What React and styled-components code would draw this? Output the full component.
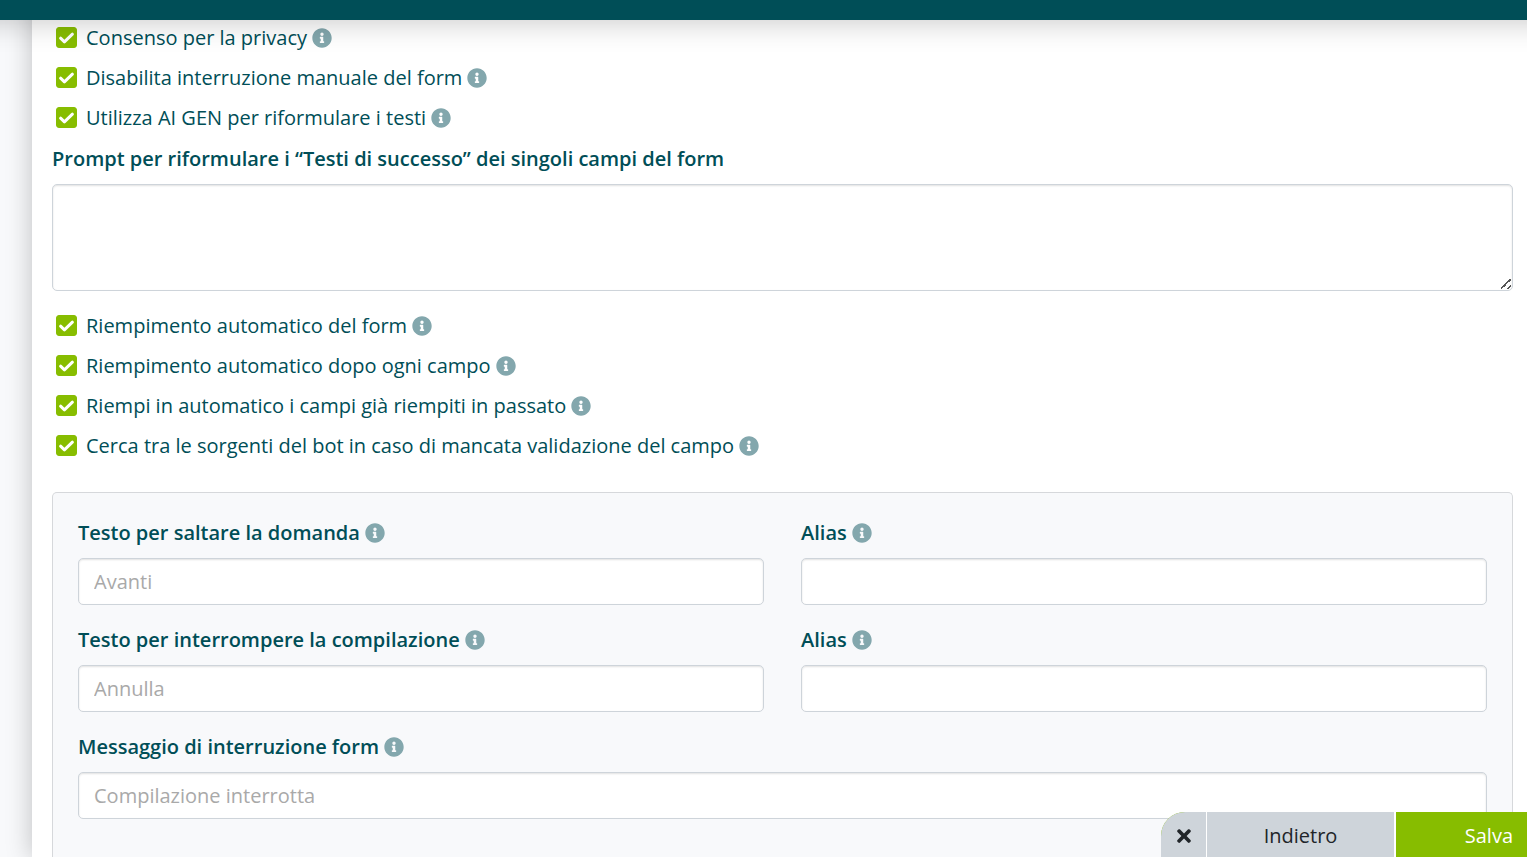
import React, { useState } from "react";
import styled, { createGlobalStyle } from "styled-components";
import { FaInfoCircle, FaTimes } from "react-icons/fa";

const GlobalStyle = createGlobalStyle`
  *, *::before, *::after { box-sizing: border-box; }
  body {
    margin: 0;
    background: #f8f9fb;
    color: #004e57;
    font: 400 20px/30px "Open Sans", sans-serif;
  }
  input, textarea, button { font: inherit; color: inherit; margin: 0; }
`;

const TopBar = styled.header`
  position: fixed;
  inset: 0 0 auto;
  z-index: 2;
  height: 20px;
  background: #004e57;
  box-shadow: 0 -40px 28px 42px rgba(0, 0, 0, 0.22);
`;

const Content = styled.main`
  display: flex;
  flex-direction: column;
  min-height: 100vh;
  margin-left: 32px;
  padding: 18px 14px 0 20px;
  background: #fff;
  box-shadow: 0 0 24px 1px rgba(0, 0, 0, 0.22);
`;

const OptionRow = styled.div`
  display: flex;
  align-items: center;
  height: 40px;
  padding-left: 4px;
`;

const OptionLabel = styled.label`
  display: flex;
  align-items: center;
  gap: 9px;
`;

const Box = styled.span`
  position: relative;
  display: flex;
  width: 21px;
  height: 21px;
  margin-bottom: 2px;

  svg {
    position: absolute;
    inset: 0;
    width: 100%;
    height: 100%;
    color: #fff;
    pointer-events: none;
  }
`;

const Checkbox = styled.input`
  appearance: none;
  width: 100%;
  height: 100%;
  border: 1px solid #87bd00;
  border-radius: 3px;
  background: #fff;

  &:checked { background: #87bd00; }
`;

const InfoIcon = styled(FaInfoCircle)`
  flex: none;
  width: 20px;
  height: 20px;
  margin: 0 0 1px 5px;
  color: #83a7ad;
`;

const FieldHead = styled.div`
  display: flex;
  align-items: center;
  margin-bottom: 10px;
  font-weight: 600;
`;

const PromptField = styled.div`
  padding: 6px 0 15px;
`;

const fieldLook = `
  display: block;
  width: 100%;
  padding: 8px 15px;
  border: 1px solid #ced4da;
  border-radius: 5px;
  background: #fff;
  box-shadow: inset 0 1px 2px rgba(0, 0, 0, 0.12);
  outline: none;
`;

const TextArea = styled.textarea`
  ${fieldLook}
  height: 107px;
  resize: vertical;

  &::-webkit-resizer {
    background: linear-gradient(
        135deg,
        transparent 44%,
        #555 44% 55%,
        transparent 55% 76%,
        #555 76% 87%,
        transparent 87%
      )
      4px 4px / 10px 10px no-repeat;
  }
`;

const TextInput = styled.input`
  ${fieldLook}
  height: 47px;

  &::placeholder { color: #a9a9a9; opacity: 1; }
`;

const Panel = styled.section`
  flex: 1;
  margin-top: 26px;
  padding: 25px 25px 36px;
  border: 1px solid #d6d8db;
  border-bottom: 0;
  border-radius: 5px 5px 0 0;
  background: #f8f9fb;
`;

const FieldGrid = styled.div`
  display: grid;
  grid-template-columns: 1fr 1fr;
  gap: 20px 37px;
`;

const FieldCell = styled.div`
  grid-column: ${(p) => (p.$wide ? "1 / -1" : "auto")};
`;

const ActionBar = styled.nav`
  position: fixed;
  right: 0;
  bottom: 0;
  z-index: 3;
  display: flex;
  height: 45px;
  border-top-left-radius: 24px;
  background: #87bd00;
`;

const ActionButton = styled.button`
  display: flex;
  align-items: center;
  justify-content: center;
  padding: 2px 0 0;
  border: 0;
  background: #ced4da;
  color: #212529;
`;

const CloseButton = styled(ActionButton)`
  width: 46px;
  border-right: 1px solid #fff;
  border-top-left-radius: 24px;
`;

const BackButton = styled(ActionButton)`
  width: 189px;
  border-right: 2px solid #fff;
`;

const SaveButton = styled(ActionButton)`
  justify-content: flex-end;
  width: 131px;
  padding-right: 14px;
  background: #87bd00;
  color: #fff;
`;

function Tick() {
  return (
    <svg viewBox="0 0 21 21" fill="none" aria-hidden="true">
      <path
        d="M4.6 11.2 8.4 14.8 16.4 7.2"
        stroke="currentColor"
        strokeWidth="3"
        strokeLinecap="round"
        strokeLinejoin="round"
      />
    </svg>
  );
}

function Option({ id, children }) {
  const [checked, setChecked] = useState(true);
  return (
    <OptionRow>
      <OptionLabel htmlFor={id}>
        <Box>
          <Checkbox id={id} type="checkbox" checked={checked} onChange={(e) => setChecked(e.target.checked)} />
          {checked && <Tick />}
        </Box>
        {children}
      </OptionLabel>
      <InfoIcon aria-hidden="true" />
    </OptionRow>
  );
}

function Field({ id, label, placeholder, wide }) {
  return (
    <FieldCell $wide={wide}>
      <FieldHead>
        <label htmlFor={id}>{label}</label>
        <InfoIcon aria-hidden="true" />
      </FieldHead>
      <TextInput id={id} type="text" placeholder={placeholder} />
    </FieldCell>
  );
}

export default function App() {
  return (
    <>
      <GlobalStyle />
      <TopBar />
      <Content>
        <Option id="privacy">Consenso per la privacy</Option>
        <Option id="no-stop">Disabilita interruzione manuale del form</Option>
        <Option id="ai-gen">Utilizza AI GEN per riformulare i testi</Option>
        <PromptField>
          <FieldHead>
            <label htmlFor="prompt">Prompt per riformulare i “Testi di successo” dei singoli campi del form</label>
          </FieldHead>
          <TextArea id="prompt" />
        </PromptField>
        <Option id="autofill">Riempimento automatico del form</Option>
        <Option id="autofill-each">Riempimento automatico dopo ogni campo</Option>
        <Option id="autofill-past">Riempi in automatico i campi già riempiti in passato</Option>
        <Option id="sources">Cerca tra le sorgenti del bot in caso di mancata validazione del campo</Option>
        <Panel>
          <FieldGrid>
            <Field id="skip" label="Testo per saltare la domanda" placeholder="Avanti" />
            <Field id="skip-alias" label="Alias" />
            <Field id="stop" label="Testo per interrompere la compilazione" placeholder="Annulla" />
            <Field id="stop-alias" label="Alias" />
            <Field id="stop-message" label="Messaggio di interruzione form" placeholder="Compilazione interrotta" wide />
          </FieldGrid>
        </Panel>
      </Content>
      <ActionBar>
        <CloseButton type="button" aria-label="Chiudi">
          <FaTimes aria-hidden="true" />
        </CloseButton>
        <BackButton type="button">Indietro</BackButton>
        <SaveButton type="button">Salva</SaveButton>
      </ActionBar>
    </>
  );
}
